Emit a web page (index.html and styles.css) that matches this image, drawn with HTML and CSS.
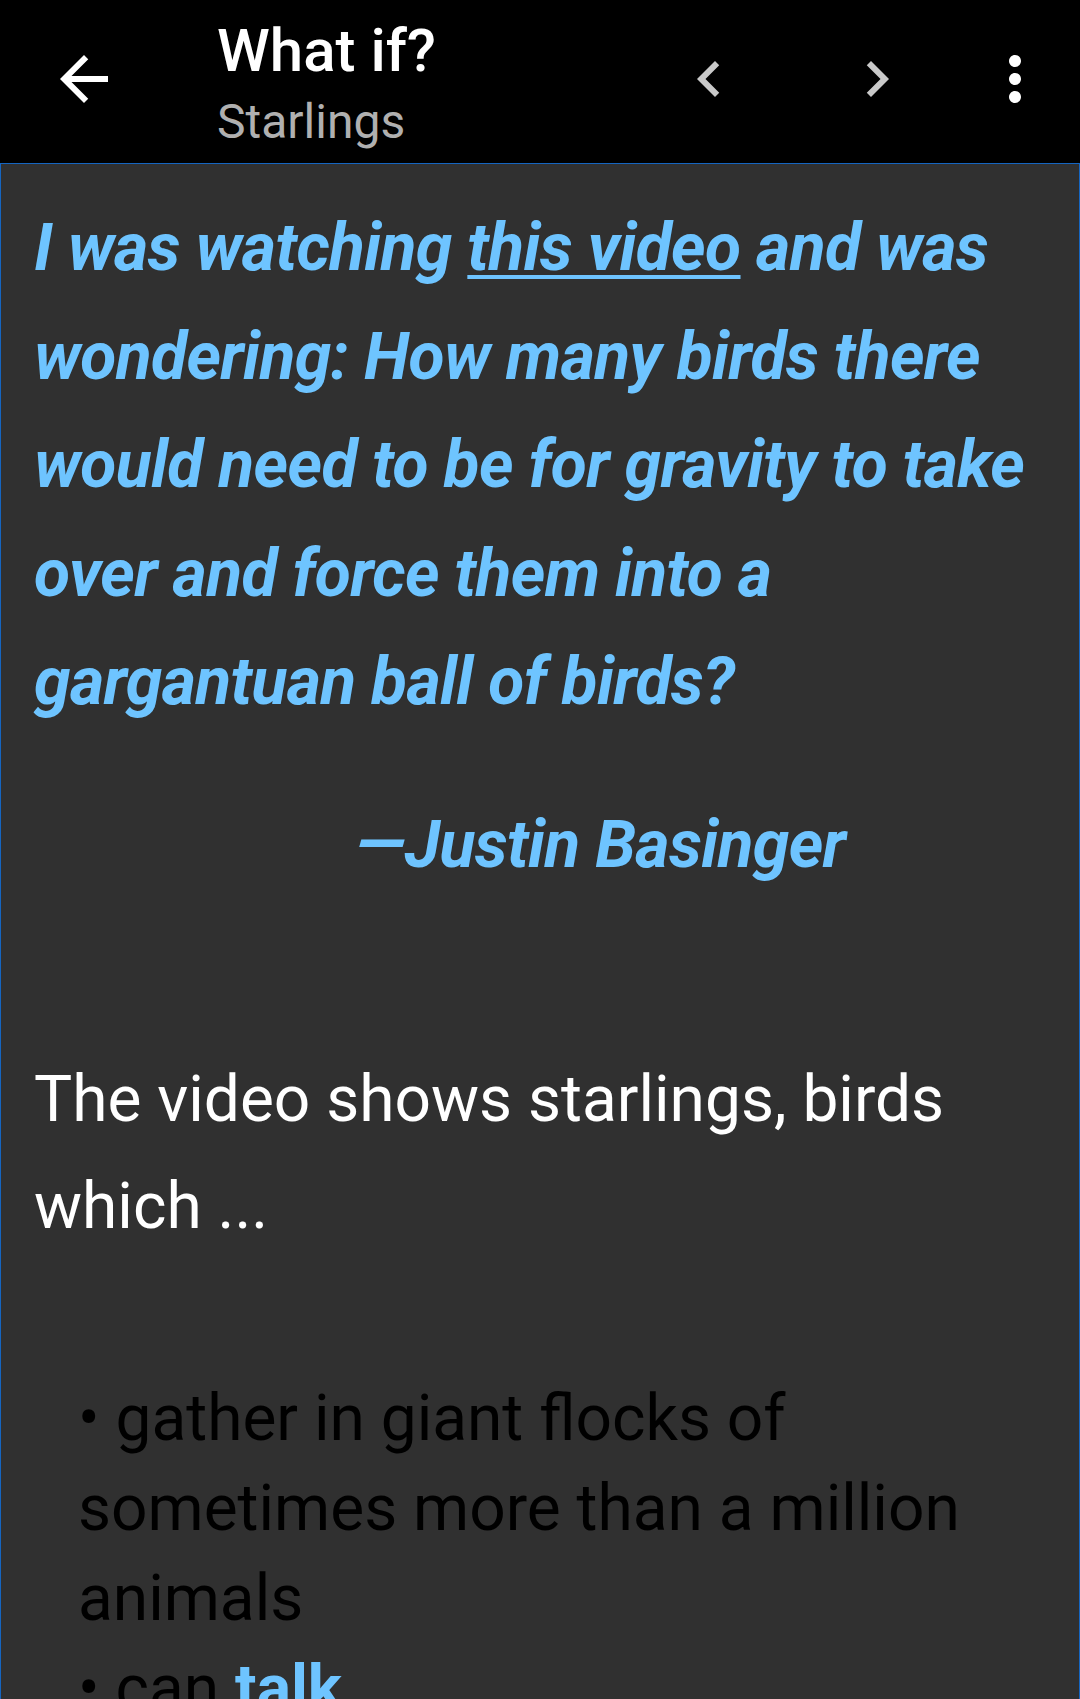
FILE: index.html
```html
<!DOCTYPE html>
<html lang="en">
<head>
<meta charset="utf-8">
<title>What if? – Starlings</title>
<link rel="stylesheet" href="styles.css">
</head>
<body>
<header class="toolbar">
  <button class="icon-btn back" aria-label="Back">
    <svg viewBox="0 0 24 24" width="72" height="72"><path fill="#ffffff" d="M20 11H7.83l5.59-5.59L12 4l-8 8 8 8 1.41-1.41L7.83 13H20v-2z"/></svg>
  </button>
  <div class="titles">
    <div class="title">What if?</div>
    <div class="subtitle">Starlings</div>
  </div>
  <button class="icon-btn prev" aria-label="Previous">
    <svg viewBox="0 0 24 24" width="72" height="72"><path fill="#c9c9c9" d="M15.41 7.41L14 6l-6 6 6 6 1.410-1.41L10.83 12z"/></svg>
  </button>
  <button class="icon-btn next" aria-label="Next">
    <svg viewBox="0 0 24 24" width="72" height="72"><path fill="#c9c9c9" d="M10 6L8.59 7.41 13.17 12l-4.58 4.59L10 18l6-6z"/></svg>
  </button>
  <button class="icon-btn more" aria-label="More options">
    <svg viewBox="0 0 24 24" width="72" height="72"><path fill="#ffffff" d="M12 8c1.1 0 2-.9 2-2s-.9-2-2-2-2 .9-2 2 .9 2 2 2zm0 2c-1.1 0-2 .9-2 2s.9 2 2 2 2-.9 2-2-.9-2-2-2zm0 6c-1.1 0-2 .9-2 2s.9 2 2 2 2-.9 2-2-.9-2-2-2z"/></svg>
  </button>
</header>
<main class="article">
  <p class="question">I was watching <a class="qlink" href="#">this video</a> and was wondering: How many birds there would need to be for gravity to take over and force them into a gargantuan ball of birds?</p>
  <p class="attribute">—Justin Basinger</p>
  <p class="body-text">The video shows starlings, birds which ...</p>
  <p class="bullets">• gather in giant flocks of sometimes more than a million animals<br>• can <a class="blink" href="#">talk</a></p>
</main>
</body>
</html>
```

FILE: styles.css
```css
html, body {
  margin: 0;
  padding: 0;
}
body {
  width: 1080px;
  height: 1699px;
  overflow: hidden;
  background: #303030;
  font-family: Roboto, "Noto Sans", "Liberation Sans", sans-serif;
}
.toolbar {
  height: 163px;
  background: #000000;
  display: flex;
  align-items: center;
  padding-bottom: 5px;
  box-sizing: border-box;
}
.icon-btn {
  width: 72px;
  height: 72px;
  padding: 0;
  border: 0;
  background: none;
  flex: none;
}
.icon-btn svg {
  display: block;
}
.back {
  margin-left: 48px;
}
.titles {
  align-self: flex-start;
  padding-top: 15px;
  margin-left: 97px;
  flex: 1;
}
.title {
  color: #ffffff;
  font-size: 60px;
  font-weight: 500;
  line-height: 72px;
}
.subtitle {
  color: #b0b0b0;
  font-size: 48px;
  line-height: 70px;
}
.next {
  margin-left: 96px;
}
.more {
  margin-left: 66px;
  margin-right: 29px;
}
.article {
  border: 1px solid #1565c0;
  border-bottom: 0;
  min-height: 1600px;
  padding: 30px 33px 0 33px;
}
.article p {
  margin: 0;
}
.question {
  color: #6ec4ff;
  font-size: 66px;
  font-weight: 700;
  font-style: italic;
  letter-spacing: -0.65px;
  line-height: 108.5px;
}
.qlink {
  color: #6ec4ff;
  text-decoration: underline;
  text-decoration-thickness: 4px;
  text-underline-offset: 5px;
}
.attribute {
  color: #6ec4ff;
  font-size: 66px;
  font-weight: 700;
  font-style: italic;
  letter-spacing: -0.65px;
  line-height: 108.5px;
  margin-top: 54px !important;
  padding-left: 322px;
}
.body-text {
  color: #ffffff;
  font-size: 64px;
  line-height: 106.5px;
  margin-top: 148px !important;
}
.bullets {
  color: #000000;
  font-size: 64px;
  line-height: 90px;
  margin-top: 114px !important;
  padding-left: 44px;
}
.blink {
  color: #6ec4ff;
  font-weight: 700;
  text-decoration: none;
}
```
